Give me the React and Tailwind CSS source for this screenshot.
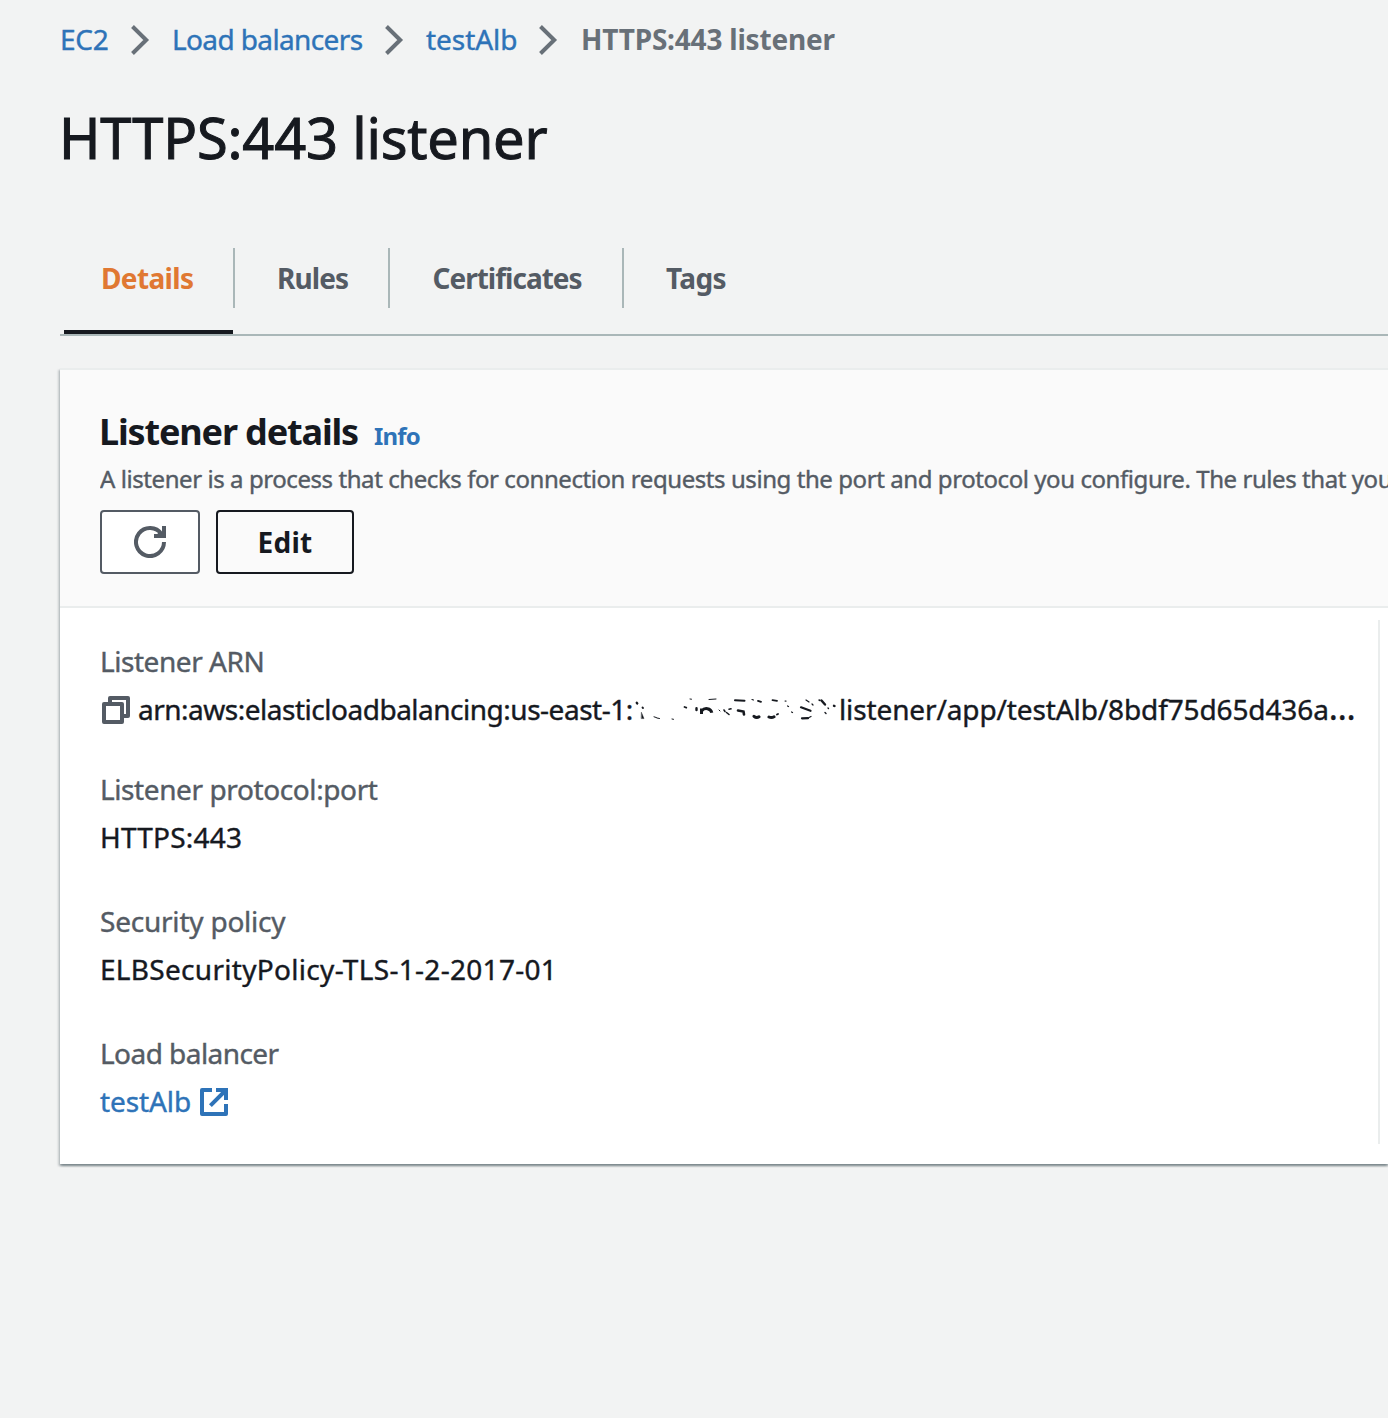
const link = "text-[#2e73b8]";

function Chevron({ className }) {
  return (
    <svg className={"h-8 w-5 shrink-0 " + className} viewBox="0 0 20 32" fill="none" stroke="#687078" strokeWidth="4">
      <path d="M2.5 2.5 16.2 16 2.5 29.5" />
    </svg>
  );
}

function RefreshIcon() {
  return (
    <svg className="h-8 w-8" viewBox="0 0 32 32" fill="none" stroke="#545b64" strokeWidth="4">
      <path d="M30 16A14 14 0 1 1 27.6 8.2" />
      <path d="M30 0V10H20M24 7 29 10" />
    </svg>
  );
}

function CopyIcon() {
  return (
    <svg className="mx-[2px] mt-0.5 h-7 w-7 shrink-0" viewBox="0 0 28 28" fill="none" stroke="#545b64" strokeWidth="4" strokeLinejoin="round">
      <path d="M8 8V2H26V20H20" />
      <path d="M2 8H20V26H2Z" fill="#fff" />
    </svg>
  );
}

function ExternalIcon() {
  return (
    <svg className="ml-2.5 mt-0.5 h-7 w-7 shrink-0" viewBox="0 0 28 28" fill="none" stroke="#2e73b8" strokeWidth="4">
      <path d="M12 2H2V26H26V16" strokeLinejoin="round" />
      <path d="M16 2H26V12M10.4 17.6 25 3" />
    </svg>
  );
}

// Account number with most of its strokes rubbed out.
function ErasedAccount() {
  return (
    <svg className="h-9 w-[205px] shrink-0" viewBox="633 692 205 36" fill="none" stroke="#16191f" strokeLinecap="round">
      <path strokeWidth="2.4" d="M636.8 703.8 637.2 704.4M696.5 709.2V711" />
      <path strokeWidth="1.8" d="M642.5 708.5 643 709M684.5 708 686.3 708.6" />
      <path fill="#16191f" strokeWidth="0.4" d="M641.5 713.5 644 719.6H641.5Z" />
      <path strokeWidth="1" d="M654 717.8 656.5 718.6M657 719 659.5 719.5M672 720 673.5 720.3M690 700 691.5 700.2M709 700.5 716 700M719 711 720 712" />
      <path strokeWidth="3" strokeLinecap="butt" d="M701.5 715V709.5M702 711.5C704.5 708.5 710.8 708.8 711.8 713.8" />
      <path strokeWidth="1.6" d="M726.5 713.5 729 715.5M724 711 725 712.5M729 710.2 731 709.8" />
      <path strokeWidth="2" d="M735 701.3 744.5 701.7" />
      <path strokeWidth="2.6" d="M738 711.5 743.5 712.5 744 715.5" />
      <path strokeWidth="3" d="M754 717.3Q756.5 719.5 759 717.8M769 718Q771.5 719.3 774 717.8" />
      <path strokeWidth="1.8" d="M758 701.8 761 702.8M772.5 701.2 777 701.8M777 715.5 778 715" />
      <path strokeWidth="1.2" d="M752 700.5 753.5 701M787.5 707 788.5 707.5M791.5 713 792.5 713.5M785 702 786 702.2" />
      <path strokeWidth="2.2" d="M801 708.3 810.5 711.8M802 719.3 808 719.2" />
      <path strokeWidth="1.2" d="M809 718.5 811 717.5M812 705 813 706M806 701 809 703" />
      <path strokeWidth="2.4" d="M821.5 701.5 825 705.5" />
      <path strokeWidth="1.4" d="M819 701 820 701.5M825 713.5 826 714.5M828 709 828.5 709.5" />
      <path strokeWidth="2.4" d="M834 706.8 834.5 707" />
    </svg>
  );
}

function Tab({ children, className }) {
  return <div className={"flex h-[60px] items-center whitespace-nowrap font-bold [-webkit-text-stroke:0] " + className}>{children}</div>;
}

function Field({ label, labelClass, className = "", children }) {
  return (
    <div className={"flex flex-col gap-1 " + className}>
      <div className={"text-[#545b64] " + labelClass}>{label}</div>
      <div className="flex h-11 items-center whitespace-nowrap">{children}</div>
    </div>
  );
}

export default function App() {
  return (
    <div className="h-[1418px] w-[1388px] overflow-hidden bg-[#f2f3f3] pl-[60px] pt-[17px] font-['Noto_Sans','Open_Sans',sans-serif] text-[28px] leading-[44px] text-[#16191f] [-webkit-text-stroke:0.4px]">
      <nav className="flex h-11 items-center whitespace-nowrap">
        <a className={"w-[49px] tracking-[-0.2px] " + link}>EC2</a>
        <Chevron className="ml-[21px] mt-0.5" />
        <a className={"ml-[22px] w-[191px] tracking-[-0.62px] " + link}>Load balancers</a>
        <Chevron className="ml-[21px] mt-0.5" />
        <a className={"ml-[22px] w-[92px] tracking-[-0.05px] " + link}>testAlb</a>
        <Chevron className="ml-[20px] mt-0.5" />
        <span className="ml-[23px] font-bold tracking-[-0.2px] text-[#687078] [-webkit-text-stroke:0]">HTTPS:443 listener</span>
      </nav>

      <h1 className="-ml-px mt-[40px] text-[56px] leading-[72px] tracking-[-0.2px] [-webkit-text-stroke:1px]">HTTPS:443 listener</h1>

      <div className="mt-[75px] flex h-[88px] items-start border-b-2 border-[#aab7b8]">
        <div className="ml-1 flex h-[86px] w-[169px] flex-col justify-between border-b-4 border-[#16191f]">
          <Tab className="pl-[37px] tracking-[-0.65px] text-[#e07832]">Details</Tab>
        </div>
        <Tab className="w-[155px] border-l-2 border-[#aab7b8] pl-[42px] tracking-[-0.9px] text-[#545b64]">Rules</Tab>
        <Tab className="w-[234px] border-l-2 border-[#aab7b8] pl-[42.5px] tracking-[-1px] text-[#545b64]">Certificates</Tab>
        <Tab className="border-l-2 border-[#aab7b8] pl-[42px] tracking-[-0.6px] text-[#545b64]">Tags</Tab>
      </div>

      <section className="mt-8 h-[796px] w-[1328px] border-t-2 border-[#eaeded] bg-white shadow-[0_2px_2px_0_rgba(0,28,36,0.3),2px_2px_2px_0_rgba(0,28,36,0.15),-2px_2px_2px_0_rgba(0,28,36,0.15)]">
        <header className="h-[238px] border-b-2 border-[#eaeded] bg-[#fafafa] pl-10 pt-10">
          <div className="flex items-baseline whitespace-nowrap [-webkit-text-stroke:0]">
            <h2 className="-ml-[1px] w-[275px] text-[36px] font-bold leading-[44px] tracking-[-1.15px]">Listener details</h2>
            <a className={"text-[24px] font-bold tracking-[-0.8px] " + link}>Info</a>
          </div>
          <p className="mt-[3px] h-9 overflow-hidden whitespace-nowrap text-[24px] leading-9 tracking-[-0.43px] text-[#545b64]">
            A listener is a process that checks for connection requests using the port and protocol you configure. The rules that you
          </p>
          <div className="mt-[13px] flex gap-4">
            <button className="flex h-16 w-[100px] items-center justify-center rounded-[4px] border-2 border-[#545b64] bg-white">
              <RefreshIcon />
            </button>
            <button className="flex h-16 w-[138px] items-center justify-center rounded-[4px] border-2 border-[#16191f] font-bold tracking-[0.3px] [-webkit-text-stroke:0]">
              Edit
            </button>
          </div>
        </header>

        <div className="flex h-[536px] items-start pl-10 pt-3">
          <div className="h-[524px] w-[1280px] shrink-0 border-r-2 border-[#eaeded] pt-[19px]">
            <Field label="Listener ARN" labelClass="tracking-[-0.45px]" className="h-32">
              <CopyIcon />
              <span className="ml-1.5 w-[495px] tracking-[-0.49px]">arn:aws:elasticloadbalancing:us-east-1:</span>
              <ErasedAccount />
              <span className="ml-px tracking-[-0.12px]">listener/app/testAlb/8bdf75d65d436a<span className="text-[34px] leading-none">…</span></span>
            </Field>
            <Field label="Listener protocol:port" labelClass="tracking-[-0.4px]" className="h-[132px]">
              <span className="tracking-[0.2px]">HTTPS:443</span>
            </Field>
            <Field label="Security policy" labelClass="tracking-[-0.22px]" className="h-[132px]">
              <span className="tracking-[0.3px]">ELBSecurityPolicy-TLS-1-2-2017-01</span>
            </Field>
            <Field label="Load balancer" labelClass="tracking-[-0.55px]">
              <a className={"w-[90px] tracking-[-0.1px] " + link}>testAlb</a>
              <ExternalIcon />
            </Field>
          </div>
        </div>
      </section>
    </div>
  );
}
